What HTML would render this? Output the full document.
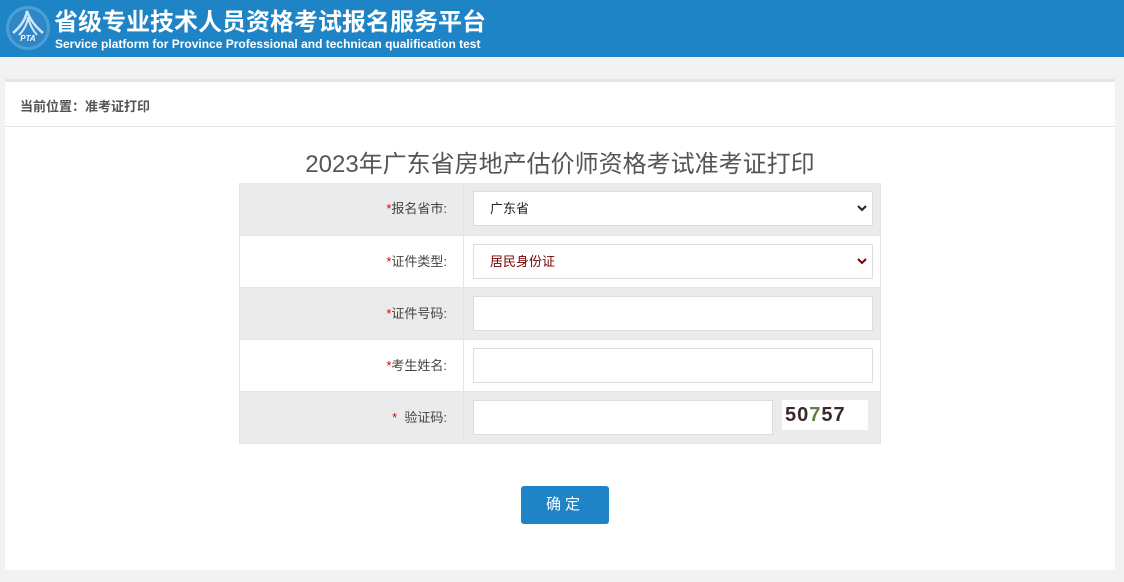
<!DOCTYPE html><html><head><meta charset="utf-8"><style>
*{margin:0;padding:0;box-sizing:border-box}
body{width:1124px;height:582px;background:#f2f2f2;font-family:"Liberation Sans","Noto Sans CJK SC",sans-serif;position:relative;overflow:hidden}
.hd{position:absolute;left:0;top:0;width:1124px;height:57px;background:#1e84c6;color:#fff}
.t1{position:absolute;left:54px;top:2px;font-size:24px;font-weight:bold;letter-spacing:0px}
.t2{position:absolute;left:55px;top:37px;font-size:12px;font-weight:bold}
.card{position:absolute;left:5px;top:79px;width:1110px;height:491px;background:#fff;border-top:3px solid #e4e7ea}
.bc{height:45px;border-bottom:1px solid #e6e6e6;font-size:13px;font-weight:bold;color:#555;padding:14px 0 0 15px}
.title{position:absolute;left:0;width:1110px;top:62px;text-align:center;font-size:24px;color:#555}
.tb{position:absolute;left:234px;top:101px;width:642px;border:1px solid #e4e4e4;border-top:none}
.row{height:52px;border-top:1px solid #e4e4e4;position:relative}
.row:first-child{border-top:none;height:52px}
.row.g{background:#ebebeb}
.lab{position:absolute;left:0;width:224px;height:100%;border-right:1px solid #e4e4e4;text-align:right;padding-right:16px;line-height:51px;font-size:13px;color:#444}
.lab i{color:#d00;font-style:normal}
.in{position:absolute;left:233px;top:8px;width:400px;height:35px;background:#fff;border:1px solid #ddd;font-size:13px;line-height:33px;padding-left:16px;color:#222}
.in svg{position:absolute;right:5px;top:12px}
.btn{position:absolute;left:516px;top:404px;width:88px;height:38px;background:#1e84c6;border-radius:3px;color:#fff;text-align:center;line-height:38px;font-size:15px;letter-spacing:4px}
</style></head><body>
<div class="hd">
<svg style="position:absolute;left:5px;top:5px" width="46" height="46" viewBox="0 0 46 46"><circle cx="23" cy="23" r="22" fill="#4a9fd6"/><circle cx="23" cy="23" r="19" fill="#2f87c6"/><path d="M8 28 Q20 18 22 6 Q26 18 38 28" fill="none" stroke="#cfe6f6" stroke-width="2.5"/><path d="M14 30 Q22 22 23 12 Q25 22 32 30" fill="none" stroke="#cfe6f6" stroke-width="2"/><text x="23" y="36" font-size="8" font-weight="bold" font-style="italic" fill="#fff" text-anchor="middle" font-family="Liberation Sans">PTA</text></svg>
<div class="t1">省级专业技术人员资格考试报名服务平台</div>
<div class="t2">Service platform for Province Professional and technican qualification test</div>
</div>
<div class="card">
<div class="bc">当前位置：准考证打印</div>
<div class="title">2023年广东省房地产估价师资格考试准考证打印</div>
<div class="tb">
<div class="row g"><div class="lab"><i>*</i>报名省市:</div><div class="in">广东省<svg width="10" height="8" viewBox="0 0 10 8"><path d="M1 2 L5 6 L9 2" fill="none" stroke="#222" stroke-width="2"/></svg></div></div>
<div class="row"><div class="lab"><i>*</i>证件类型:</div><div class="in" style="color:#700">居民身份证<svg width="10" height="8" viewBox="0 0 10 8"><path d="M1 2 L5 6 L9 2" fill="none" stroke="#700" stroke-width="2"/></svg></div></div>
<div class="row g"><div class="lab"><i>*</i>证件号码:</div><div class="in"></div></div>
<div class="row"><div class="lab"><i>*</i>考生姓名:</div><div class="in"></div></div>
<div class="row g"><div class="lab"><i>*</i>&nbsp;&nbsp;验证码:</div><div class="in" style="width:300px"></div>
<div style="position:absolute;left:542px;top:8px;width:86px;height:30px;background:#fff;font-size:20px;font-weight:bold;color:#3a2a2a;line-height:30px;padding-left:3px;letter-spacing:1px">50<span style="color:#6a7a4a">7</span>57</div></div>
</div>
<div class="btn">确定</div>
</div>
</body></html>
